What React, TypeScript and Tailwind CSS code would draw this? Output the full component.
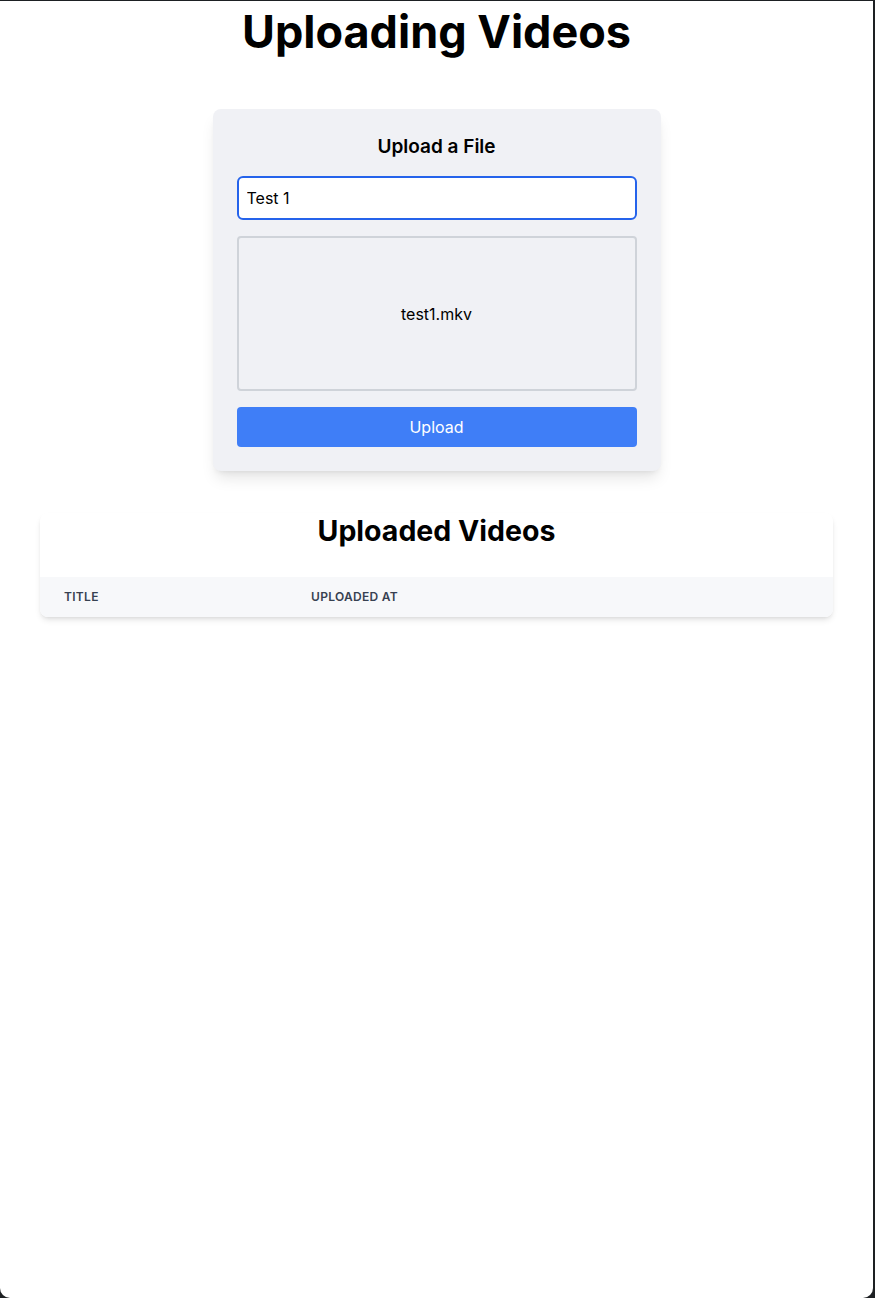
import React, { useState } from 'react';

export default function App() {
  const [title, setTitle] = useState('Test 1');

  return (
    <div className="h-[1298px] bg-[#1d2023] pt-px pr-[2px] font-['Inter',sans-serif]">
      <div className="h-full bg-white rounded-b-[10px] text-black">
        <h1 className="pt-[7px] text-[45px] font-bold text-center leading-[48px]">Uploading Videos</h1>

        {/* Upload form */}
        <div className="mt-[53px] w-[448px] mx-auto bg-[#f0f1f5] rounded-lg shadow-lg p-6">
          <h2 className="text-[19px] font-semibold text-center leading-7 mb-[15px]">Upload a File</h2>
          <input
            value={title}
            onChange={(e) => setTitle(e.target.value)}
            className="w-full border-2 border-[#2563eb] rounded-md bg-white px-2 py-2 text-base outline-none"
          />
          <div className="mt-4 h-[155px] border-2 border-[#cfd3d9] rounded flex items-center justify-center text-base">
            test1.mkv
          </div>
          <button className="mt-4 w-full bg-[#3f7ef7] text-white rounded py-2 text-base">Upload</button>
        </div>

        {/* List */}
        <div className="px-10 mt-[42px]">
          <div className="bg-white rounded-lg shadow-md overflow-hidden">
            <h2 className="text-[28.5px] font-bold text-center leading-9 mb-7">Uploaded Videos</h2>
            <table className="w-full table-fixed">
              <thead className="bg-[#f7f8fa]">
                <tr>
                  <th className="w-[247px] px-6 py-3 text-left text-xs font-semibold uppercase tracking-wide text-[#374151]">Title</th>
                  <th className="px-6 py-3 text-left text-xs font-semibold uppercase tracking-wide text-[#374151]">Uploaded At</th>
                </tr>
              </thead>
              <tbody />
            </table>
          </div>
        </div>
      </div>
    </div>
  );
}
